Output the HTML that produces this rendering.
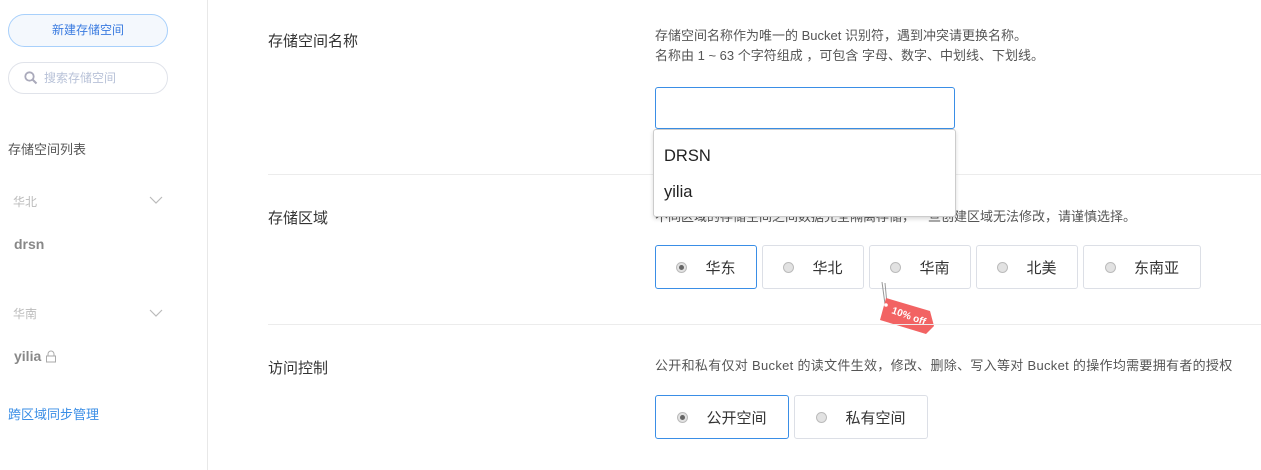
<!DOCTYPE html><html><head><meta charset="utf-8"><style>
body{margin:0;width:1261px;height:470px;overflow:hidden;background:#fff;font-family:"Liberation Sans","Noto Sans CJK SC",sans-serif;position:relative}
.a{position:absolute}
.side{left:0;top:0;width:207px;height:470px;border-right:1px solid #e8e8e8}
.lbl{font-size:15px;color:#333}
.desc{font-size:13px;color:#555}
.hr{height:1px;background:#ececec;left:268px;right:0}
.rb{height:44px;border:1px solid #dcdfe6;border-radius:3px;box-sizing:border-box;font-size:15px;color:#333;display:flex;align-items:center;justify-content:center}
.rb i{width:11px;height:11px;border-radius:50%;background:#e2e2e2;border:1px solid #bbb;box-sizing:border-box;margin-right:18px;position:relative}
.rb.on{border-color:#3a8ee6}
.rb.on i:after{content:"";position:absolute;left:2px;top:2px;width:5px;height:5px;border-radius:50%;background:#666}
</style></head><body>
<div class="a side"></div>
<div class="a" style="left:8px;top:14px;width:160px;height:33px;box-sizing:border-box;border:1px solid #a8d0fb;background:#f4f8fd;border-radius:17px;color:#3a7be0;font-size:12px;text-align:center;line-height:31px">新建存储空间</div>
<div class="a" style="left:8px;top:62px;width:160px;height:32px;box-sizing:border-box;border:1px solid #e0e3ea;border-radius:16px;color:#b8c2d8;font-size:12px;line-height:30px;padding-left:35px">搜索存储空间
<svg class="a" style="left:15px;top:8px" width="14" height="14" viewBox="0 0 14 14"><circle cx="5.5" cy="5.5" r="4.2" fill="none" stroke="#aab" stroke-width="1.8"/><path d="M8.5 8.5L12.5 12.5" stroke="#aab" stroke-width="2"/></svg></div>
<div class="a" style="left:8px;top:139px;font-size:13px;color:#555">存储空间列表</div>
<div class="a" style="left:13px;top:193px;font-size:12px;color:#bbb">华北</div>
<svg class="a" style="left:149px;top:196px" width="14" height="9"><path d="M1 1L7 7L13 1" fill="none" stroke="#bbb" stroke-width="1.2"/></svg>
<div class="a" style="left:14px;top:236px;font-size:14px;color:#888;font-weight:bold">drsn</div>
<div class="a" style="left:13px;top:305px;font-size:12px;color:#bbb">华南</div>
<svg class="a" style="left:149px;top:309px" width="14" height="9"><path d="M1 1L7 7L13 1" fill="none" stroke="#bbb" stroke-width="1.2"/></svg>
<div class="a" style="left:14px;top:348px;font-size:14px;color:#888;font-weight:bold">yilia</div>
<svg class="a" style="left:45px;top:350px" width="12" height="13"><path d="M3 6V4a3 3 0 0 1 6 0v2" fill="none" stroke="#aaa"/><rect x="1.5" y="6" width="9" height="6" fill="none" stroke="#aaa"/></svg>
<div class="a" style="left:8px;top:404px;font-size:13px;color:#3a8ee6">跨区域同步管理</div>

<div class="a lbl" style="left:268px;top:30px">存储空间名称</div>
<div class="a desc" style="left:655px;top:26px;line-height:20px">存储空间名称作为唯一的 Bucket 识别符，遇到冲突请更换名称。<br>名称由 1 ~ 63 个字符组成 ，可包含 字母、数字、中划线、下划线。</div>
<div class="a" style="left:655px;top:87px;width:300px;height:42px;box-sizing:border-box;border:1px solid #3a8ee6;border-radius:3px"></div>
<div class="a hr" style="top:174px"></div>
<div class="a lbl" style="left:268px;top:207px">存储区域</div>
<div class="a desc" style="left:655px;top:206px">不同区域的存储空间之间数据完全隔离存储，一旦创建区域无法修改，请谨慎选择。</div>
<div class="a" style="left:653px;top:129px;width:303px;height:88px;box-sizing:border-box;background:#fff;border:1px solid #ccc;border-radius:3px;box-shadow:0 2px 4px rgba(0,0,0,.15);font-size:16.5px;color:#222">
<div class="a" style="left:10px;top:17px">DRSN</div><div class="a" style="left:10px;top:53px">yilia</div></div>
<div class="a rb on" style="left:655px;top:245px;width:102px"><i></i>华东</div>
<div class="a rb" style="left:762px;top:245px;width:102px"><i></i>华北</div>
<div class="a rb" style="left:869px;top:245px;width:102px"><i></i>华南</div>
<div class="a rb" style="left:976px;top:245px;width:102px"><i></i>北美</div>
<div class="a rb" style="left:1083px;top:245px;width:118px"><i></i>东南亚</div>
<svg class="a" style="left:876px;top:282px" width="62" height="52"><path d="M6 0L9 22M9 1L11 22" stroke="#999" stroke-width="1"/><path d="M10 16L54 29L58 44L50 52L4 38Z" fill="#f26363"/><circle cx="10" cy="23" r="1.8" fill="#fff"/><text x="15" y="31" transform="rotate(20 15 31)" font-size="10" font-weight="bold" fill="#fff" font-family="Liberation Sans">10% off</text></svg>
<div class="a hr" style="top:324px"></div>
<div class="a lbl" style="left:268px;top:357px">访问控制</div>
<div class="a desc" style="left:655px;top:355px;white-space:nowrap;letter-spacing:0.3px">公开和私有仅对 Bucket 的读文件生效，修改、删除、写入等对 Bucket 的操作均需要拥有者的授权</div>
<div class="a rb on" style="left:655px;top:395px;width:134px"><i></i>公开空间</div>
<div class="a rb" style="left:794px;top:395px;width:134px"><i></i>私有空间</div>
</body></html>
